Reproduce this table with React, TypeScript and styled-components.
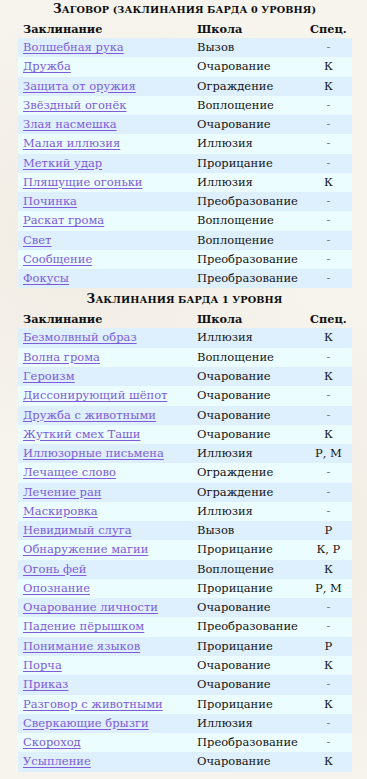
import React from "react";
import styled, { createGlobalStyle } from "styled-components";

type Spell = [string, string, string];

const cantrips: Spell[] = [
    ["Волшебная рука", "Вызов", "-"],
    ["Дружба", "Очарование", "К"],
    ["Защита от оружия", "Ограждение", "К"],
    ["Звёздный огонёк", "Воплощение", "-"],
    ["Злая насмешка", "Очарование", "-"],
    ["Малая иллюзия", "Иллюзия", "-"],
    ["Меткий удар", "Прорицание", "-"],
    ["Пляшущие огоньки", "Иллюзия", "К"],
    ["Починка", "Преобразование", "-"],
    ["Раскат грома", "Воплощение", "-"],
    ["Свет", "Воплощение", "-"],
    ["Сообщение", "Преобразование", "-"],
    ["Фокусы", "Преобразование", "-"],
];

const level1: Spell[] = [
    ["Безмолвный образ", "Иллюзия", "К"],
    ["Волна грома", "Воплощение", "-"],
    ["Героизм", "Очарование", "К"],
    ["Диссонирующий шёпот", "Очарование", "-"],
    ["Дружба с животными", "Очарование", "-"],
    ["Жуткий смех Таши", "Очарование", "К"],
    ["Иллюзорные письмена", "Иллюзия", "Р, М"],
    ["Лечащее слово", "Ограждение", "-"],
    ["Лечение ран", "Ограждение", "-"],
    ["Маскировка", "Иллюзия", "-"],
    ["Невидимый слуга", "Вызов", "Р"],
    ["Обнаружение магии", "Прорицание", "К, Р"],
    ["Огонь фей", "Воплощение", "К"],
    ["Опознание", "Прорицание", "Р, М"],
    ["Очарование личности", "Очарование", "-"],
    ["Падение пёрышком", "Преобразование", "-"],
    ["Понимание языков", "Прорицание", "Р"],
    ["Порча", "Очарование", "К"],
    ["Приказ", "Очарование", "-"],
    ["Разговор с животными", "Прорицание", "К"],
    ["Сверкающие брызги", "Иллюзия", "-"],
    ["Скороход", "Преобразование", "-"],
    ["Усыпление", "Очарование", "К"],
];

const GlobalStyle = createGlobalStyle`
    html, body {
        margin: 0;
        padding: 0;
        background: #f7f4ee;
    }
    body {
        font-family: "DejaVu Serif", "Liberation Serif", serif;
        color: #141414;
    }
`;

const Page = styled.div`
    width: 367px;
    min-height: 779px;
    box-sizing: border-box;
    padding: 0 16px 0 18px;
    background:
        radial-gradient(circle at 20% 30%, rgba(230, 222, 208, 0.35), transparent 40%),
        radial-gradient(circle at 80% 70%, rgba(232, 224, 210, 0.35), transparent 45%),
        #f7f4ee;
`;

const Title = styled.div`
    height: 19px;
    padding-top: 1px;
    text-align: center;
    font-weight: bold;
    font-size: 9.7px;
    line-height: 17px;
    text-transform: uppercase;
    letter-spacing: 0.1px;
    color: #0c0c0c;
`;

const TitleCap = styled.span`
    font-size: 12px;
`;

const Grid = styled.div`
    display: grid;
    grid-template-columns: 174px 113px 1fr;
`;

const HeadCell = styled.div<{ $center?: boolean }>`
    height: 18px;
    padding: 0 5px;
    font-weight: bold;
    font-size: 11.3px;
    line-height: 18px;
    color: #111;
    text-align: ${(p) => (p.$center ? "center" : "left")};
`;

const Cell = styled.div<{ $odd: boolean; $center?: boolean; $muted?: boolean }>`
    height: 19.27px;
    padding: 0 5px;
    font-size: 11.5px;
    line-height: 19.27px;
    white-space: nowrap;
    background: ${(p) => (p.$odd ? "#def0fe" : "#ebfdff")};
    text-align: ${(p) => (p.$center ? "center" : "left")};
    color: ${(p) => (p.$muted ? "#777" : "#141414")};
`;

const SpellLink = styled.a`
    color: #7d5bd9;
    text-decoration: underline;
    text-underline-offset: 2px;
`;

const Section = styled.section<{ $gap?: number }>`
    padding-top: ${(p) => p.$gap ?? 0}px;
`;

const SpellTable = ({ title, spells, gap }: { title: string; spells: Spell[]; gap?: number }) => {
    return (
        <Section $gap={gap}>
            <Title>
                <TitleCap>{title.charAt(0)}</TitleCap>
                {title.slice(1)}
            </Title>
            <Grid>
                <HeadCell>Заклинание</HeadCell>
                <HeadCell>Школа</HeadCell>
                <HeadCell $center>Спец.</HeadCell>
                {spells.map(([name, school, spec], i) => (
                    <React.Fragment key={name}>
                        <Cell $odd={i % 2 === 0}>
                            <SpellLink href="#">{name}</SpellLink>
                        </Cell>
                        <Cell $odd={i % 2 === 0}>{school}</Cell>
                        <Cell $odd={i % 2 === 0} $center $muted={spec === "-"}>
                            {spec}
                        </Cell>
                    </React.Fragment>
                ))}
            </Grid>
        </Section>
    );
};

const App = () => {
    return (
        <>
            <GlobalStyle />
            <Page>
                <SpellTable title="Заговор (заклинания барда 0 уровня)" spells={cantrips} />
                <SpellTable title="Заклинания барда 1 уровня" spells={level1} gap={2} />
            </Page>
        </>
    );
};

export default App;
